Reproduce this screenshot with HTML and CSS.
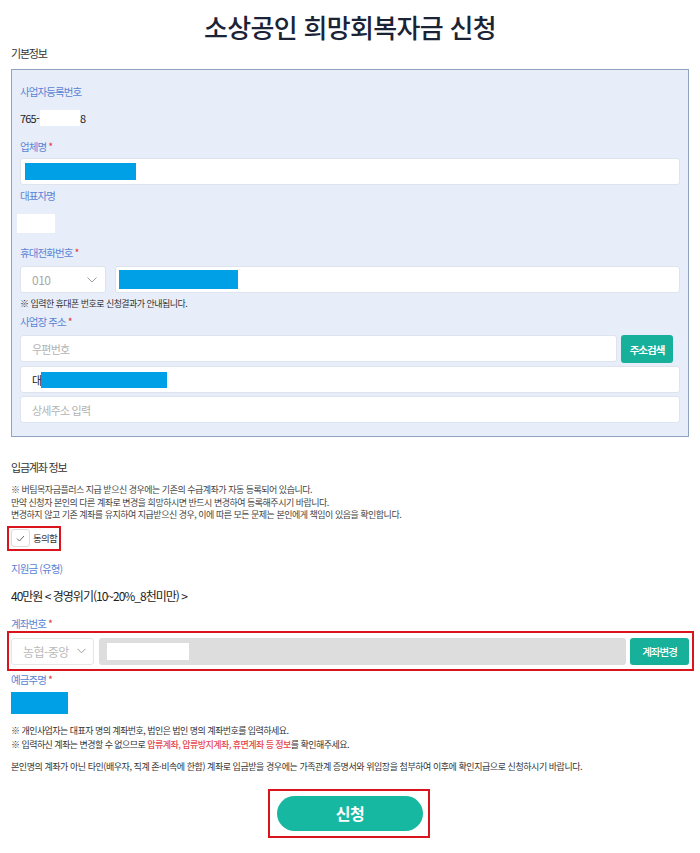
FILE: index.html
```html
<!DOCTYPE html>
<html lang="ko">
<head>
<meta charset="utf-8">
<title>소상공인 희망회복자금 신청</title>
<link rel="stylesheet" href="styles.css">
</head>
<body>
<main class="page">
  <h1 class="title">소상공인 희망회복자금 신청</h1>
  <h2 class="section-title">기본정보</h2>

  <section class="info-box">
    <div class="label first">사업자등록번호</div>
    <div class="value biz-no">765-<span class="mask-white mask-biz"></span>8</div>

    <div class="label gap-13">업체명<span class="req">*</span></div>
    <div class="input field"><span class="mask-blue mask-company"></span></div>

    <div class="label gap-3">대표자명</div>
    <div class="mask-white mask-ceo"></div>

    <div class="label gap-12">휴대전화번호<span class="req">*</span></div>
    <div class="phone-row">
      <div class="input select phone-select">
        <span class="select-text">010</span>
        <svg class="chev" width="10" height="6" viewBox="0 0 10 6"><path d="M0.5 0.5 L5 5 L9.5 0.5" fill="none" stroke="#9a9a9a" stroke-width="1"/></svg>
      </div>
      <div class="input grow"><span class="mask-blue mask-phone"></span></div>
    </div>
    <p class="hint">※ 입력한 휴대폰 번호로 신청결과가 안내됩니다.</p>

    <div class="label gap-3">사업장 주소<span class="req">*</span></div>
    <div class="zip-row">
      <div class="input grow"><span class="placeholder">우편번호</span></div>
      <button class="btn-teal btn-zip" type="button">주소검색</button>
    </div>
    <div class="input field gap-7"><span class="addr-text">대</span><span class="mask-blue mask-addr"></span></div>
    <div class="input field gap-7"><span class="placeholder">상세주소 입력</span></div>
  </section>

  <h2 class="section-title account-title">입금계좌 정보</h2>
  <p class="notice">※ 버팀목자금플러스 지급 받으신 경우에는 기존의 수급계좌가 자동 등록되어 있습니다.<br>만약 신청자 본인의 다른 계좌로 변경을 희망하시면 반드시 변경하여 등록해주시기 바랍니다.<br>변경하지 않고 기존 계좌를 유지하여 지급받으신 경우, 이에 따른 모든 문제는 본인에게 책임이 있음을 확인합니다.</p>
  <div class="agree-wrap">
    <label class="agree">
      <span class="checkbox"><svg width="9" height="7" viewBox="0 0 9 7"><path d="M1 3.6 L3.4 6 L8 1" fill="none" stroke="#666" stroke-width="1"/></svg></span>
      <span class="agree-text">동의함</span>
    </label>
  </div>

  <div class="label plain gap-10">지원금 (유형)</div>
  <div class="amount">40만원 &lt; 경영위기(10~20%_8천미만) &gt;</div>

  <div class="label plain account-label">계좌번호<span class="req">*</span></div>
  <div class="account-row">
    <div class="input select bank-select">
      <span class="select-text bank-text">농협-중앙</span>
      <svg class="chev" width="9" height="6" viewBox="0 0 9 6"><path d="M0.5 0.8 L4.5 4.8 L8.5 0.8" fill="none" stroke="#9a9a9a" stroke-width="1"/></svg>
    </div>
    <div class="account-input"><span class="mask-white mask-account"></span></div>
    <button class="btn-teal btn-account" type="button">계좌변경</button>
  </div>

  <div class="label plain holder-label">예금주명<span class="req">*</span></div>
  <div class="mask-blue mask-holder"></div>

  <p class="notice2">※ 개인사업자는 대표자 명의 계좌번호, 법인은 법인 명의 계좌번호를 입력하세요.<br>※ 입력하신 계좌는 변경할 수 없으므로 <span class="warn">압류계좌, 압류방지계좌, 휴면계좌 등 정보</span>를 확인해주세요.</p>
  <p class="notice3">본인명의 계좌가 아닌 타인(배우자, 직계 존·비속에 한함) 계좌로 입금받을 경우에는 가족관계 증명서와 위임장을 첨부하여 이후에 확인지급으로 신청하시기 바랍니다.</p>

  <div class="submit-wrap">
    <div class="submit-frame">
      <button class="btn-submit" type="button">신청</button>
    </div>
  </div>
</main>
</body>
</html>
```

FILE: styles.css
```css
* { box-sizing: border-box; }

html, body {
  margin: 0;
  padding: 0;
  background: #ffffff;
}

body {
  font-family: "Noto Sans CJK KR", "Noto Sans", sans-serif;
  color: #222;
}

.page {
  width: 700px;
  padding: 0 11px;
}

.title {
  margin: 0;
  padding-top: 9px;
  font-size: 26px;
  line-height: 36px;
  font-weight: 500;
  letter-spacing: -0.7px;
  text-align: center;
  color: #1b2436;
}

.section-title {
  margin: 0;
  font-size: 11px;
  line-height: 16px;
  font-weight: 400;
  letter-spacing: -1.2px;
  color: #333;
}

.info-box {
  margin-top: 8px;
  background: #e7eefa;
  border: 1px solid #8fa3bf;
  padding: 14px 8px 13px;
}

.label {
  font-size: 10.5px;
  line-height: 16px;
  height: 16px;
  letter-spacing: -0.9px;
  color: #5b84d4;
}

.label.plain { color: #5b84d4; }

.req {
  color: #e0393e;
  margin-left: 2px;
  letter-spacing: 0;
}

.gap-3 { margin-top: 3px; }
.gap-7 { margin-top: 7px; }
.gap-10 { margin-top: 10px; }
.gap-12 { margin-top: 12px; }
.gap-13 { margin-top: 13px; }

.value {
  margin-top: 10px;
  height: 16px;
  line-height: 16px;
  font-size: 11px;
  letter-spacing: -0.8px;
  color: #222;
  display: flex;
  align-items: center;
}

.mask-white {
  display: inline-block;
  background: #ffffff;
}

.mask-blue {
  display: inline-block;
  background: #00a0e6;
}

.mask-biz {
  width: 40px;
  height: 16px;
  margin: 0 0 0 1px;
}

.input {
  height: 27px;
  background: #ffffff;
  border: 1px solid #dde4ee;
  border-radius: 3px;
  padding: 4px 4px 4px 10px;
  display: flex;
  align-items: center;
}

.field { margin-top: 3px; }

.mask-company {
  width: 111px;
  height: 17px;
  margin-left: -6px;
}

.mask-ceo {
  display: block;
  margin-top: 10px;
  margin-left: -3px;
  width: 38px;
  height: 19px;
}

.phone-row {
  margin-top: 5px;
  display: flex;
  gap: 9px;
}

.grow { flex: 1; }

.phone-select {
  width: 86px;
  justify-content: space-between;
  padding: 0 8px 0 11px;
}

.select-text {
  font-size: 12px;
  letter-spacing: -0.5px;
  color: #a8a8a8;
}

.chev { display: block; }

.mask-phone {
  width: 119px;
  height: 19px;
  margin-left: -7px;
}

.hint {
  margin: 4px 0 0;
  font-size: 9px;
  line-height: 14px;
  letter-spacing: -0.55px;
  color: #333;
}

.zip-row {
  margin-top: 5px;
  display: flex;
  gap: 4px;
  padding-right: 7px;
  align-items: flex-start;
}

.placeholder {
  font-size: 11px;
  letter-spacing: -0.8px;
  color: #b2b2b2;
  padding-left: 1px;
}

.btn-teal {
  border: none;
  border-radius: 3px;
  background: #17b19b;
  color: #ffffff;
  font-family: "Noto Sans CJK KR", sans-serif;
  font-size: 10.5px;
  font-weight: 700;
  letter-spacing: -1px;
  padding: 0;
  cursor: pointer;
}

.btn-zip {
  width: 52px;
  height: 28px;
}

.addr-text {
  font-size: 11px;
  color: #222;
  letter-spacing: -1px;
  padding-left: 1px;
}

.mask-addr {
  width: 126px;
  height: 16px;
}

.account-title {
  margin-top: 22px;
}

.notice {
  margin: 9px 0 0;
  font-size: 9px;
  line-height: 12.5px;
  letter-spacing: -0.5px;
  color: #444;
}

.agree-wrap {
  margin-top: 1px;
  margin-left: -4px;
}

.agree {
  display: inline-flex;
  align-items: center;
  gap: 3px;
  height: 25px;
  border: 2px solid #d9141c;
  padding: 0 2px;
}

.checkbox {
  width: 19px;
  height: 18px;
  border: 1px solid #dcdcdc;
  border-radius: 3px;
  background: #fff;
  display: flex;
  align-items: center;
  justify-content: center;
}

.checkbox svg { display: block; }

.agree-text {
  font-size: 9.5px;
  letter-spacing: -0.8px;
  color: #333;
}

.amount {
  margin-top: 11px;
  font-size: 12px;
  line-height: 16px;
  letter-spacing: -1px;
  color: #222;
}

.account-label {
  margin-top: 13px;
  line-height: 14px;
  height: 14px;
}

.account-row {
  margin: 0 -5px 0 -4px;
  border: 2px solid #d9141c;
  padding: 5px 3px 4px 2px;
  display: flex;
  gap: 5px;
}

.bank-select {
  width: 83px;
  justify-content: flex-start;
  gap: 8px;
  padding: 0 0 0 11px;
  border-color: #e6e6e6;
}

.bank-text {
  color: #b9b9b9;
}

.account-input {
  flex: 1;
  height: 27px;
  background: #dddddd;
  border-radius: 3px;
  display: flex;
  align-items: center;
  padding-left: 8px;
}

.mask-account {
  width: 82px;
  height: 17px;
}

.btn-account {
  width: 59px;
  height: 27px;
  margin-left: -1px;
  font-weight: 500;
}

.holder-label {
  margin-top: 1px;
}

.mask-holder {
  display: block;
  margin-top: 4px;
  width: 57px;
  height: 22px;
}

.notice2 {
  margin: 10px 0 0;
  font-size: 9px;
  line-height: 14px;
  letter-spacing: -0.55px;
  color: #333;
}

.warn {
  color: #e5484d;
  font-weight: 500;
}

.notice3 {
  margin: 8px 0 0;
  font-size: 9px;
  line-height: 14px;
  letter-spacing: -0.45px;
  color: #333;
}

.submit-wrap {
  margin-top: 15px;
  display: flex;
  justify-content: center;
  padding-right: 2px;
}

.submit-frame {
  border: 2px solid #d9141c;
  padding: 5px 5px 5px 7px;
}

.btn-submit {
  display: block;
  width: 146px;
  height: 35px;
  border: none;
  border-radius: 18px;
  background: #17b8a2;
  color: #ffffff;
  font-family: "Noto Sans CJK KR", sans-serif;
  font-size: 16px;
  font-weight: 700;
  letter-spacing: -0.5px;
  cursor: pointer;
}
```
